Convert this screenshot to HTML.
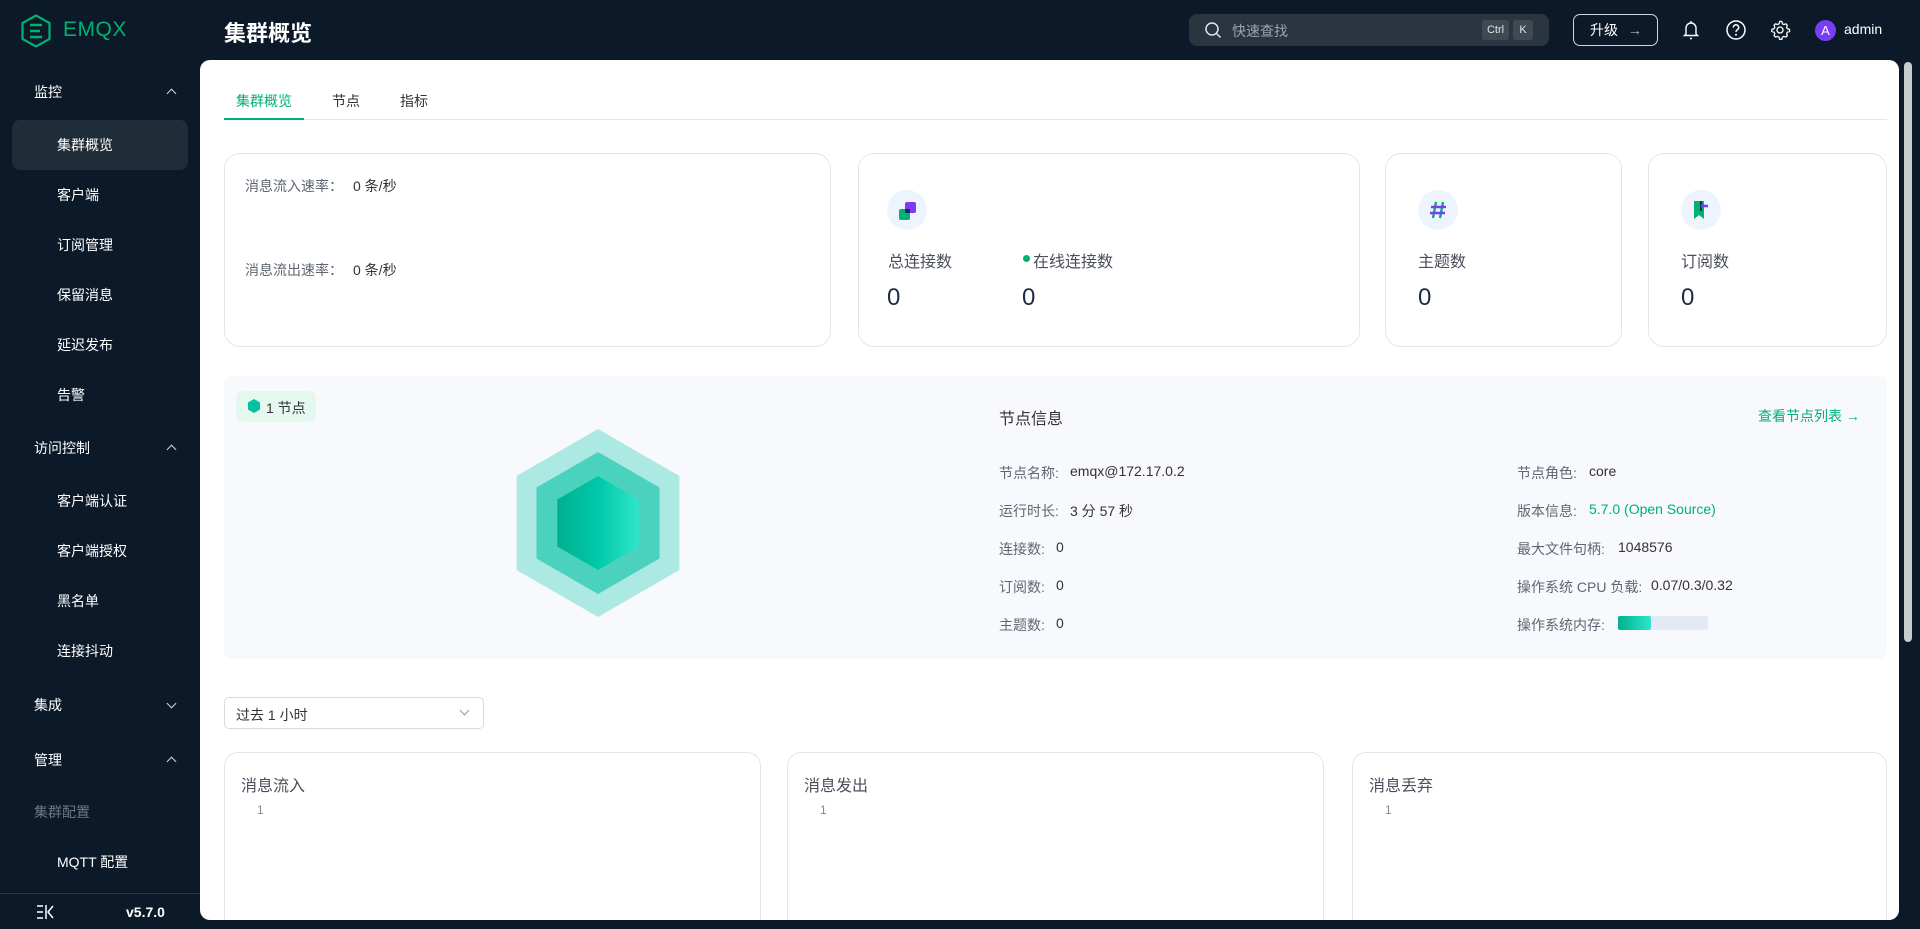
<!DOCTYPE html>
<html><head><meta charset="utf-8">
<style>
*{box-sizing:border-box;margin:0;padding:0}
body{width:1920px;height:929px;overflow:hidden;background:#0b1929;font-family:"Liberation Sans","Noto Sans CJK SC",sans-serif;position:relative;color:#333}
.a{position:absolute}
.side{left:0;top:60px;width:200px;height:834px;overflow:hidden}
.si{position:absolute;font-size:14px;color:#fff;white-space:nowrap}
.grp{left:34px}
.ch{left:57px}
.chev{position:absolute;left:168px;width:7px;height:7px;border-left:1.3px solid #cfd6dd;border-top:1.3px solid #cfd6dd}
.up{transform:rotate(45deg)}
.down{transform:rotate(225deg)}
.main{left:200px;top:60px;width:1699px;height:860px;background:#fff;border-radius:10px;overflow:hidden}
.card{position:absolute;border:1px solid #e3e5ee;border-radius:16px;background:#fff}
.lbl{position:absolute;font-size:14px;color:#5f6673;white-space:nowrap}
.val{position:absolute;font-size:14px;color:#333;white-space:nowrap}
.ic{position:absolute;width:40px;height:40px;border-radius:50%;background:#eef4fd}
.big{position:absolute;font-size:24px;color:#1f2a44}
.ttl{position:absolute;font-size:16px;color:#4a4f5a}
</style></head><body>
<svg class="a" style="left:20px;top:14px" width="32" height="34" viewBox="0 0 32 34"><path d="M16 1.5 L29.5 9 V25 L16 32.5 L2.5 25 V9 Z" fill="none" stroke="#00b173" stroke-width="2.2"/><path d="M10 11h12M10 17h10M10 23h12" stroke="#00b173" stroke-width="2.4"/></svg>
<div class="a" style="left:63px;top:18px;font-size:21px;color:#00b173;letter-spacing:.5px">EMQX</div>
<div class="a" style="left:224px;top:16px;font-size:22px;color:#fff;font-weight:bold">集群概览</div>
<div class="a" style="left:1189px;top:14px;width:360px;height:32px;background:#2a353f;border-radius:8px"></div>
<svg class="a" style="left:1204px;top:21px" width="18" height="18" viewBox="0 0 18 18"><circle cx="8" cy="8" r="6" fill="none" stroke="#dfe4e8" stroke-width="1.5"/><path d="M12.5 12.5l4 4" stroke="#dfe4e8" stroke-width="1.5"/></svg>
<div class="a" style="left:1232px;top:21px;font-size:14px;color:#9aa4ad">快速查找</div>
<div class="a" style="left:1482px;top:20px;width:27px;height:20px;background:#3e4952;border-radius:3px;color:#e0e4e8;font-size:11px;text-align:center;line-height:20px">Ctrl</div>
<div class="a" style="left:1513px;top:20px;width:20px;height:20px;background:#3e4952;border-radius:3px;color:#e0e4e8;font-size:11px;text-align:center;line-height:20px">K</div>
<div class="a" style="left:1573px;top:14px;width:85px;height:32px;border:1px solid #cfd6dd;border-radius:7px;color:#fff;font-size:14px;line-height:30px;padding-left:16px">升级 <span style="color:#bbb;margin-left:6px">→</span></div>
<svg class="a" style="left:1681px;top:19px" width="20" height="22" viewBox="0 0 20 22"><path d="M5 15V9a5 5 0 0110 0v6l1.5 1.5h-13Z" fill="none" stroke="#fff" stroke-width="1.4"/><circle cx="10" cy="19.5" r="1" fill="#fff"/><path d="M10 2v2" stroke="#fff" stroke-width="1.4"/></svg>
<svg class="a" style="left:1725px;top:19px" width="22" height="22" viewBox="0 0 22 22"><circle cx="11" cy="11" r="9" fill="none" stroke="#fff" stroke-width="1.5"/><path d="M8.3 8.5a2.7 2.7 0 115 1.4c-.8.9-2.3 1.3-2.3 3" fill="none" stroke="#fff" stroke-width="1.5"/><circle cx="11" cy="15.8" r="1" fill="#fff"/></svg>
<svg class="a" style="left:1769px;top:19px" width="22" height="22" viewBox="0 0 24 24"><path d="M12 2.5l2 .3.6 2.3 1.6.9 2.3-.7 1.4 1.5-.7 2.3.9 1.6 2.3.6v2.4l-2.3.6-.9 1.6.7 2.3-1.4 1.5-2.3-.7-1.6.9-.6 2.3h-2.4l-.6-2.3-1.6-.9-2.3.7-1.500-1.500.7-2.3-.9-1.6-2.3-.6v-2.4l2.3-.6.9-1.6-.7-2.3 1.5-1.5 2.3.7 1.6-.9.6-2.3z" fill="none" stroke="#fff" stroke-width="1.4"/><circle cx="12" cy="12" r="3.3" fill="none" stroke="#fff" stroke-width="1.4"/></svg>
<div class="a" style="left:1815px;top:20px;width:21px;height:21px;border-radius:50%;background:#7b3cf6;color:#fff;font-size:13px;text-align:center;line-height:21px">A</div>
<div class="a" style="left:1844px;top:21px;font-size:14px;color:#fff">admin</div>

<div class="a side">
<div class="si grp" style="top:22px">监控</div><div class="chev up" style="top:30px"></div>
<div class="a" style="left:12px;top:60px;width:176px;height:50px;background:#1f2d38;border-radius:8px"></div>
<div class="si ch" style="top:75px">集群概览</div>
<div class="si ch" style="top:125px">客户端</div>
<div class="si ch" style="top:175px">订阅管理</div>
<div class="si ch" style="top:225px">保留消息</div>
<div class="si ch" style="top:275px">延迟发布</div>
<div class="si ch" style="top:325px">告警</div>
<div class="si grp" style="top:378px">访问控制</div><div class="chev up" style="top:386px"></div>
<div class="si ch" style="top:431px">客户端认证</div>
<div class="si ch" style="top:481px">客户端授权</div>
<div class="si ch" style="top:531px">黑名单</div>
<div class="si ch" style="top:581px">连接抖动</div>
<div class="si grp" style="top:635px">集成</div><div class="chev down" style="top:640px"></div>
<div class="si grp" style="top:690px">管理</div><div class="chev up" style="top:698px"></div>
<div class="si grp" style="top:742px;color:#6e7881">集群配置</div>
<div class="si ch" style="top:792px">MQTT 配置</div>
</div>
<div class="a" style="left:0;top:893px;width:200px;height:1px;background:#2a3744"></div>
<svg class="a" style="left:36px;top:904px" width="20" height="16" viewBox="0 0 20 16"><path d="M1 2h6M1 8h6M1 14h6M10 1v14M17 2l-5 6 5 6" fill="none" stroke="#fff" stroke-width="1.5"/></svg>
<div class="a" style="left:126px;top:904px;font-size:14px;color:#fff;font-weight:bold">v5.7.0</div>

<div class="a" style="left:1904px;top:62px;width:8px;height:580px;background:#c8cbd0;border-radius:4px"></div>

<div class="a main">
<div class="a" style="left:24px;top:59px;width:1663px;height:1px;background:#e3e5ee"></div>
<div class="a" style="left:36px;top:31px;font-size:14px;color:#00b173">集群概览</div>
<div class="a" style="left:24px;top:58px;width:80px;height:2px;background:#00b173"></div>
<div class="a" style="left:132px;top:31px;font-size:14px;color:#333">节点</div>
<div class="a" style="left:200px;top:31px;font-size:14px;color:#333">指标</div>

<div class="card" style="left:24px;top:93px;width:607px;height:194px">
 <div class="lbl" style="left:20px;top:22px">消息流入速率：</div><div class="val" style="left:128px;top:22px">0 条/秒</div>
 <div class="lbl" style="left:20px;top:106px">消息流出速率：</div><div class="val" style="left:128px;top:106px">0 条/秒</div>
</div>
<div class="card" style="left:658px;top:93px;width:502px;height:194px">
 <div class="ic" style="left:28px;top:36px"><svg width="40" height="40"><rect x="12" y="19" width="11" height="11" rx="2" fill="#00b173"/><rect x="18" y="12" width="11" height="11" rx="2" fill="#7b3cf6"/><rect x="18" y="19" width="5" height="4" fill="#1d2b4f"/></svg></div>
 <div class="ttl" style="left:29px;top:94px">总连接数</div>
 <div class="a" style="left:164px;top:101px;width:7px;height:7px;border-radius:50%;background:#00b173"></div>
 <div class="ttl" style="left:174px;top:94px">在线连接数</div>
 <div class="big" style="left:28px;top:130px">0</div><div class="big" style="left:163px;top:130px">0</div>
</div>
<div class="card" style="left:1185px;top:93px;width:237px;height:194px">
 <div class="ic" style="left:32px;top:36px"><svg width="40" height="40"><path d="M18 12l-3 16M25 12l-3 16" stroke="#00b173" stroke-width="2.4"/><path d="M13 17h15M12 23h15" stroke="#7b3cf6" stroke-width="2.4"/></svg></div>
 <div class="ttl" style="left:32px;top:94px">主题数</div><div class="big" style="left:32px;top:130px">0</div>
</div>
<div class="card" style="left:1448px;top:93px;width:239px;height:194px">
 <div class="ic" style="left:32px;top:36px"><svg width="40" height="40"><path d="M13 11h10v18l-5-4-5 4Z" fill="#00b173"/><path d="M20 11v10" stroke="#1d2b4f" stroke-width="2"/><path d="M20 16h7" stroke="#7b3cf6" stroke-width="2.6"/></svg></div>
 <div class="ttl" style="left:32px;top:94px">订阅数</div><div class="big" style="left:32px;top:130px">0</div>
</div>

<div class="a" style="left:24px;top:316px;width:1663px;height:283px;background:#f8f9fc;border-radius:8px">
 <div class="a" style="left:12px;top:15px;width:80px;height:31px;background:#e5f8f0;border-radius:7px"></div>
 <svg class="a" style="left:24px;top:23px" width="12" height="14" viewBox="0 0 12 14"><path d="M6 0l6 3.5v7L6 14 0 10.5v-7Z" fill="#00c4a0"/></svg>
 <div class="a" style="left:42px;top:22px;font-size:14px;color:#333">1 节点</div>
 <svg class="a" style="left:289px;top:52px" width="170" height="190" viewBox="-85 -95 170 190">
  <defs><linearGradient id="g" x1="0" x2="1"><stop offset="0" stop-color="#00b08f"/><stop offset=".5" stop-color="#00c8aa"/><stop offset="1" stop-color="#2ee6c8"/></linearGradient></defs>
  <polygon points="0,-94 81.4,-47 81.4,47 0,94 -81.4,47 -81.4,-47" fill="#a8e8e0" opacity=".95"/>
  <polygon points="0,-71 61.5,-35.5 61.5,35.5 0,71 -61.5,35.5 -61.5,-35.5" fill="#3fcfbb" opacity=".9"/>
  <polygon points="0,-47 40.7,-23.5 40.7,23.5 0,47 -40.7,23.5 -40.7,-23.5" fill="url(#g)"/>
 </svg>
 <div class="a" style="left:775px;top:29px;font-size:16px;color:#333">节点信息</div>
 <div class="a" style="left:1534px;top:30px;font-size:14px;color:#00b173">查看节点列表 →</div>
 <div class="lbl" style="left:775px;top:87px">节点名称:</div><div class="val" style="left:846px;top:87px">emqx@172.17.0.2</div>
 <div class="lbl" style="left:775px;top:125px">运行时长:</div><div class="val" style="left:846px;top:125px">3 分 57 秒</div>
 <div class="lbl" style="left:775px;top:163px">连接数:</div><div class="val" style="left:832px;top:163px">0</div>
 <div class="lbl" style="left:775px;top:201px">订阅数:</div><div class="val" style="left:832px;top:201px">0</div>
 <div class="lbl" style="left:775px;top:239px">主题数:</div><div class="val" style="left:832px;top:239px">0</div>
 <div class="lbl" style="left:1293px;top:87px">节点角色:</div><div class="val" style="left:1365px;top:87px">core</div>
 <div class="lbl" style="left:1293px;top:125px">版本信息:</div><div class="val" style="left:1365px;top:125px;color:#00b173">5.7.0 (Open Source)</div>
 <div class="lbl" style="left:1293px;top:163px">最大文件句柄:</div><div class="val" style="left:1394px;top:163px">1048576</div>
 <div class="lbl" style="left:1293px;top:201px">操作系统 CPU 负载:</div><div class="val" style="left:1427px;top:201px">0.07/0.3/0.32</div>
 <div class="lbl" style="left:1293px;top:239px">操作系统内存:</div>
 <div class="a" style="left:1394px;top:240px;width:90px;height:14px;background:#e3e9f5;border-radius:2px"></div>
 <div class="a" style="left:1394px;top:240px;width:33px;height:14px;background:linear-gradient(90deg,#00b08f,#2ee6c8);border-radius:2px"></div>
</div>

<div class="a" style="left:24px;top:637px;width:260px;height:32px;border:1px solid #d6d9e0;border-radius:5px">
 <div class="a" style="left:11px;top:7px;font-size:14px;color:#333">过去 1 小时</div>
 <div class="a" style="left:236px;top:9px;width:7px;height:7px;border-right:1.2px solid #999;border-bottom:1.2px solid #999;transform:rotate(45deg)"></div>
</div>

<div class="card" style="left:24px;top:692px;width:537px;height:220px;border-radius:14px"><div class="ttl" style="left:16px;top:19px">消息流入</div><div class="a" style="left:32px;top:50px;font-size:12px;color:#888">1</div></div>
<div class="card" style="left:587px;top:692px;width:537px;height:220px;border-radius:14px"><div class="ttl" style="left:16px;top:19px">消息发出</div><div class="a" style="left:32px;top:50px;font-size:12px;color:#888">1</div></div>
<div class="card" style="left:1152px;top:692px;width:535px;height:220px;border-radius:14px"><div class="ttl" style="left:16px;top:19px">消息丢弃</div><div class="a" style="left:32px;top:50px;font-size:12px;color:#888">1</div></div>
</div>
</body></html>
